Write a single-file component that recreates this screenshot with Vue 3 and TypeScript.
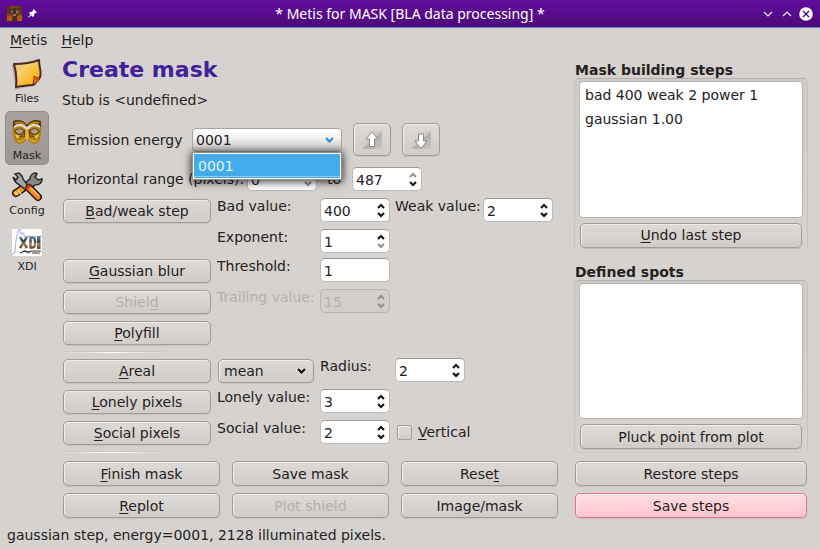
<script setup lang="ts">
import { computed, ref } from 'vue'

interface Part { text: string; mark: boolean }
type Cell =
  | { kind: 'button'; text: string; disabled?: boolean }
  | { kind: 'label'; text: string; target: string; disabled?: boolean }
  | { kind: 'spin'; id: string; min?: boolean; max?: boolean; disabled?: boolean }
  | { kind: 'text'; id: string }
  | { kind: 'select'; id: string; options: string[] }
  | { kind: 'check'; text: string }
  | { kind: 'rule' }
  | { kind: 'gap' }

// An ampersand marks the character that acts as the keyboard mnemonic.
function parts(label: string): Part[] {
  const at = label.indexOf('&')
  if (at < 0) return [{ text: label, mark: false }]
  return [
    { text: label.slice(0, at), mark: false },
    { text: label[at + 1], mark: true },
    { text: label.slice(at + 2), mark: false },
  ].filter((p) => p.text)
}

const values = ref<Record<string, string>>({
  low: '0', high: '487', bad: '400', weak: '2', exponent: '1', threshold: '1',
  trailing: '15', method: 'mean', radius: '2', lonely: '3', social: '2',
})
const vertical = ref(false)
const energy = ref('0001')
const energies = ['0001']
const menuOpen = ref(true)
const tool = ref('Mask')
const tools = ['Files', 'Mask', 'Config', 'XDI']
const steps = ref(['bad 400 weak 2 power 1', 'gaussian 1.00'])
const status = computed(() => `gaussian step, energy=${energy.value}, 2128 illuminated pixels.`)

const gap: Cell = { kind: 'gap' }
const cells: Cell[] = [
  { kind: 'button', text: '&Bad/weak step' },
  { kind: 'label', text: 'Bad value:', target: 'bad' },
  { kind: 'spin', id: 'bad' },
  { kind: 'label', text: 'Weak value:', target: 'weak' },
  { kind: 'spin', id: 'weak' },
  gap,
  { kind: 'label', text: 'Exponent:', target: 'exponent' },
  { kind: 'spin', id: 'exponent', min: true },
  gap, gap,
  { kind: 'button', text: '&Gaussian blur' },
  { kind: 'label', text: 'Threshold:', target: 'threshold' },
  { kind: 'text', id: 'threshold' },
  gap, gap,
  { kind: 'button', text: 'Shiel&d', disabled: true },
  { kind: 'label', text: 'Trailing value:', target: 'trailing', disabled: true },
  { kind: 'spin', id: 'trailing', disabled: true },
  gap, gap,
  { kind: 'button', text: '&Polyfill' },
  gap, gap, gap, gap,
  { kind: 'rule' },
  { kind: 'button', text: '&Areal' },
  { kind: 'select', id: 'method', options: ['mean', 'median'] },
  { kind: 'label', text: 'Radius:', target: 'radius' },
  { kind: 'spin', id: 'radius' },
  gap,
  { kind: 'button', text: '&Lonely pixels' },
  { kind: 'label', text: 'Lonely value:', target: 'lonely' },
  { kind: 'spin', id: 'lonely' },
  gap, gap,
  { kind: 'button', text: '&Social pixels' },
  { kind: 'label', text: 'Social value:', target: 'social' },
  { kind: 'spin', id: 'social' },
  { kind: 'check', text: '&Vertical' },
  gap,
  { kind: 'rule' },
]
const actions = [
  { text: '&Finish mask' }, { text: 'Save mask' }, { text: 'Rese&t' },
  { text: '&Replot' }, { text: 'Plot shield', disabled: true }, { text: 'Image/mask' },
]

function bump(id: string, by: number) {
  values.value[id] = String(Number(values.value[id]) + by)
}
function pick(value: string) {
  energy.value = value
  menuOpen.value = false
}
</script>

<template>
  <div class="window">
    <header class="titlebar">
      <div class="title-left">
        <svg class="app-icon" width="15" height="15" viewBox="0 0 15 15" aria-hidden="true">
          <rect width="15" height="15" fill="#8c4214" />
          <path d="M0 0h4l-1 4 1 3-4 2zM15 0h-4l1 4-1 3 4 2z" fill="#643018" />
          <path d="M3 2l2 1 2-1 3 1 2-1v3l-2 4v2l1 4H5l1-4V9L3 6z" fill="#3d322b" />
          <path d="M4 4l2 1v2L4 6zM9 5l3-1-1 3-2 1zM6 8h3v2H6z" fill="#8f7866" />
          <path d="M0 9l5 2v4H0zM10 11l5-2v6h-5z" fill="#b8560f" />
        </svg>
        <svg width="9" height="9" viewBox="0 0 9 9" aria-hidden="true">
          <path d="M5.6 0L9 3.4 8 4 7.4 3.8 6 5.4 6 7 5 8 3.2 6.2.8 8.4.2 7.8 2.6 5.6 1 4 2 3 3.6 3 5.2 1.6 5 .8z" fill="#fff" />
        </svg>
      </div>
      <div class="title">* Metis for MASK [BLA data processing] *</div>
      <div class="title-right">
        <button class="win" aria-label="Minimize">
          <svg width="14" height="14" viewBox="0 0 14 14"><path d="M3 5l4 4 4-4" fill="none" stroke="#efe6f8" stroke-width="1.2" /></svg>
        </button>
        <button class="win" aria-label="Maximize">
          <svg width="14" height="14" viewBox="0 0 14 14"><path d="M3 9l4-4 4 4" fill="none" stroke="#efe6f8" stroke-width="1.2" /></svg>
        </button>
        <button class="win" aria-label="Close">
          <svg width="14" height="14" viewBox="0 0 14 14"><circle cx="7" cy="7" r="6.8" fill="#fff" /><path d="M4 4l6 6M10 4l-6 6" stroke="#4b0d80" stroke-width="1.4" /></svg>
        </button>
      </div>
    </header>

    <nav class="menubar">
      <button v-for="m in ['&Metis', '&Help']" :key="m" class="menu"><span v-for="(p, i) in parts(m)" :key="i" :class="{ mark: p.mark }">{{ p.text }}</span></button>
    </nav>

    <div class="body">
      <nav class="tools">
        <button v-for="t in tools" :key="t" class="tool" :class="{ active: t === tool }" @click="tool = t">
          <svg v-if="t === 'Files'" width="32" height="32" viewBox="0 0 32 32" aria-hidden="true">
            <defs>
              <linearGradient id="note" x1="0" y1="0" x2="1" y2="1">
                <stop offset="0" stop-color="#e3b878" /><stop offset=".35" stop-color="#f5cc72" /><stop offset=".65" stop-color="#f9bd28" /><stop offset="1" stop-color="#f2a71d" />
              </linearGradient>
            </defs>
            <path d="M1 6C2 14 4 22 4 31c7-2 14-4 21-4l-4-20z" fill="#8b8783" opacity=".55" />
            <path d="M3 5c9 0 17-1 25-4 0 8 3 12 1 17-2 4-5 6-7 8-6 0-11 1-17 2C6 20 5 12 3 5z" fill="url(#note)" stroke="#4e2a1c" stroke-width="2" stroke-linejoin="round" />
            <path d="M22 25c1-3 1-5 1-8 2 2 4 2 6 2-1 3-4 5-7 6z" fill="#ee7a1d" stroke="#7d3015" stroke-width="1" />
            <path d="M25 18l2 2-2 3z" fill="#e72f19" />
          </svg>
          <svg v-else-if="t === 'Mask'" width="32" height="32" viewBox="0 0 32 32" aria-hidden="true">
            <path d="M2 6C6 4 12 5 16 8c4-3 10-4 14-2 1 6 0 15-2 20-4 3-8 2-10-1l-2-2-2 2c-2 3-6 4-10 1C2 20 1 11 2 6z" fill="#b07f16" />
            <path d="M2 5c5-2 11-1 14 4 3-5 9-6 14-4v6c-5-3-10-2-12 2h-4C12 9 7 8 2 11z" fill="#5c3a14" />
            <path d="M3 10c5-4 10-2 13 1 3-3 8-5 13-1v2c-5-3-9-2-11 1h-4c-2-3-6-4-11-1z" fill="#e2dacd" />
            <path d="M4 7c4-1 8 0 10 2M28 7c-4-1-8 0-10 2" fill="none" stroke="#c99720" stroke-width="1.5" />
            <path d="M4 15c2-3 7-3 9 0-1 4-7 5-9 0zM19 15c2-3 7-3 9 0-2 5-8 4-9 0z" fill="#a9a19b" stroke="#6b440d" stroke-width="1.2" />
            <path d="M14 13h4l1 9-3 2-3-2z" fill="#e5b534" />
            <path d="M14 14l-1 8M18 14l1 8M5 21l7-1M20 20l7 1" stroke="#5b3808" stroke-width="1.2" />
            <path d="M4 18l5 2-3 3zM23 20l5-2-2 5z" fill="#f5c633" />
            <path d="M6 25c4 1 7-1 8-3M26 25c-4 1-7-1-8-3" stroke="#f0c43b" fill="none" />
          </svg>
          <svg v-else-if="t === 'Config'" width="32" height="32" viewBox="0 0 32 32" aria-hidden="true">
            <path d="M14 16L5 22" stroke="#211a16" stroke-width="8" stroke-linecap="round" />
            <path d="M14 16L5 22" stroke="#f39a20" stroke-width="5" stroke-linecap="round" />
            <path d="M7 19l3 4M4 21l3 3" stroke="#ffe084" stroke-width="1.5" />
            <path d="M14 15c1-4 3-6 5-7 0-3 2-6 6-6l1 1-2 3 3 3 4-1c0 4-3 6-7 6-2 1-4 4-7 5z" fill="#898987" stroke="#292827" stroke-width="1.5" />
            <path d="M4 3l4-1c2 2 4 3 4 6l6 8-3 3-8-6C5 12 3 9 2 6l3 3 2-3z" fill="#a4a4a2" stroke="#292827" stroke-width="1.5" />
            <path d="M18 17l9 9" stroke="#251b16" stroke-width="8" stroke-linecap="round" />
            <path d="M18 17l9 9" stroke="#f38723" stroke-width="5" stroke-linecap="round" />
            <path d="M20 17l8 8" stroke="#ffc27c" stroke-width="1.5" />
            <path d="M15 18l4-4" stroke="#df2618" stroke-width="3" />
          </svg>
          <svg v-else width="32" height="32" viewBox="0 0 32 32" aria-hidden="true">
            <defs>
              <linearGradient id="metal" gradientUnits="userSpaceOnUse" x1="0" y1="9" x2="0" y2="22">
                <stop offset="0" stop-color="#6d8ba0" /><stop offset=".45" stop-color="#36444b" /><stop offset=".6" stop-color="#ad8355" /><stop offset="1" stop-color="#4f3926" />
              </linearGradient>
            </defs>
            <path d="M1 2h30v27H1z" fill="#fff" />
            <path d="M1 28l3-3 1-12 2-9 2-2 1 5 2-1 2 4 3-1 3 1 11-1" fill="none" stroke="#b8b6f6" stroke-width="1.2" />
            <path d="M9 10l7 11M16 10L9 21M27.500 9.500v12" fill="none" stroke="url(#metal)" stroke-width="2.600" />
            <path d="M19.500 10.500h2c3.500 0 3.500 10 0 10h-2z" fill="none" stroke="url(#metal)" stroke-width="2.400" />
            <path d="M26 9h3.500v13H26z" fill="url(#metal)" />
            <path d="M9 26l5-2 3 1 4-1h9M12 24l7 2M21 26h8" fill="none" stroke="#3b3733" stroke-width="1.2" />
          </svg>
          <span>{{ t }}</span>
        </button>
      </nav>

      <main class="main">
        <h1>Create mask</h1>
        <p class="stub">Stub is &lt;undefined&gt;</p>

        <div class="line energy-line">
          <label class="line-label" for="energy">Emission energy</label>
          <div class="combo">
            <select id="energy" v-model="energy" class="energy-select">
              <option v-for="e in energies" :key="e">{{ e }}</option>
            </select>
            <svg class="combo-arrow" width="9" height="6" viewBox="0 0 9 6" aria-hidden="true"><path d="M1 1l3.5 3.5L8 1" fill="none" stroke="#3684df" stroke-width="2" /></svg>
            <div v-if="menuOpen" class="popup" role="listbox" aria-label="Emission energy">
              <div v-for="e in energies" :key="e" class="option" role="option" :aria-selected="e === energy" @click="pick(e)">{{ e }}</div>
            </div>
          </div>
          <button v-for="d in ['Up', 'Down']" :key="d" class="btn arrow" :aria-label="d">
            <svg width="22" height="20" viewBox="0 0 22 20" aria-hidden="true">
              <defs>
                <linearGradient :id="'tile' + d" x1="0" y1="0" x2="1" y2="1">
                  <stop offset="0" stop-color="#dedcda" /><stop offset=".5" stop-color="#cbc9c6" /><stop offset=".52" stop-color="#b3b1af" /><stop offset="1" stop-color="#c9c7c5" />
                </linearGradient>
              </defs>
              <rect x="1" y="1" width="20" height="18" rx="3" :fill="`url(#tile${d})`" />
              <path v-if="d === 'Up'" d="M11 2L17 9h-3.500v7.500h-5V9H5z" fill="#fff" stroke="#8b8a88" />
              <path v-else d="M11 18.500L17 11h-3.500V4h-5v7H5z" fill="#fff" stroke="#8b8a88" />
            </svg>
          </button>
        </div>

        <div class="line range-line">
          <label class="line-label" for="low">Horizontal range (pixels):</label>
          <template v-for="id in ['low', 'high']" :key="id">
            <label v-if="id === 'high'" class="to" for="high">to</label>
            <div class="spin">
              <input :id="id" v-model="values[id]" type="text" />
              <div class="steppers">
                <button aria-label="Increase" :class="{ dim: id === 'high' }" @click="bump(id, 1)"><svg width="8" height="6" viewBox="0 0 8 6"><path d="M1 5l3-3 3 3" /></svg></button>
                <button aria-label="Decrease" :class="{ dim: id === 'low' }" @click="bump(id, -1)"><svg width="8" height="6" viewBox="0 0 8 6"><path d="M1 1l3 3 3-3" /></svg></button>
              </div>
            </div>
          </template>
        </div>

        <div class="form">
          <template v-for="(c, n) in cells" :key="n">
            <button v-if="c.kind === 'button'" class="btn" :disabled="c.disabled"><span v-for="(p, i) in parts(c.text)" :key="i" :class="{ mark: p.mark }">{{ p.text }}</span></button>
            <label v-else-if="c.kind === 'label'" class="field-label" :class="{ off: c.disabled }" :for="c.target">{{ c.text }}</label>
            <div v-else-if="c.kind === 'spin'" class="spin" :class="{ disabled: c.disabled }">
              <input :id="c.id" v-model="values[c.id]" type="text" :disabled="c.disabled" />
              <div class="steppers">
                <button aria-label="Increase" :disabled="c.disabled" :class="{ dim: c.max || c.disabled }" @click="bump(c.id, 1)"><svg width="8" height="6" viewBox="0 0 8 6"><path d="M1 5l3-3 3 3" /></svg></button>
                <button aria-label="Decrease" :disabled="c.disabled" :class="{ dim: c.min || c.disabled }" @click="bump(c.id, -1)"><svg width="8" height="6" viewBox="0 0 8 6"><path d="M1 1l3 3 3-3" /></svg></button>
              </div>
            </div>
            <div v-else-if="c.kind === 'text'" class="spin">
              <input :id="c.id" v-model="values[c.id]" type="text" />
            </div>
            <div v-else-if="c.kind === 'select'" class="combo method">
              <select :id="c.id" v-model="values[c.id]" class="btn method-select" aria-label="Averaging method">
                <option v-for="o in c.options" :key="o">{{ o }}</option>
              </select>
              <svg class="combo-arrow" width="9" height="6" viewBox="0 0 9 6" aria-hidden="true"><path d="M1 1l3.5 3.5L8 1" fill="none" stroke="#111" stroke-width="2" /></svg>
            </div>
            <label v-else-if="c.kind === 'check'" class="check">
              <input v-model="vertical" type="checkbox" />
              <span><span v-for="(p, i) in parts(c.text)" :key="i" :class="{ mark: p.mark }">{{ p.text }}</span></span>
            </label>
            <div v-else-if="c.kind === 'rule'" class="rule"></div>
            <div v-else></div>
          </template>
        </div>

        <div class="actions">
          <button v-for="a in actions" :key="a.text" class="btn tall" :disabled="a.disabled"><span v-for="(p, i) in parts(a.text)" :key="i" :class="{ mark: p.mark }">{{ p.text }}</span></button>
        </div>
      </main>

      <aside class="side">
        <div class="groups">
          <section class="group">
            <h2>Mask building steps</h2>
            <div class="frame">
              <ul class="list"><li v-for="s in steps" :key="s">{{ s }}</li></ul>
              <button class="btn tall" @click="steps.pop()"><span class="mark">U</span>ndo last step</button>
            </div>
          </section>
          <section class="group">
            <h2>Defined spots</h2>
            <div class="frame">
              <ul class="list"></ul>
              <button class="btn tall">Pluck point from plot</button>
            </div>
          </section>
        </div>
        <div class="side-actions">
          <button class="btn tall">Restore steps</button>
          <button class="btn tall pink">Save steps</button>
        </div>
      </aside>
    </div>

    <footer class="status">{{ status }}</footer>
  </div>
</template>

<style>
body {
  margin: 0;
  background: #d6d2cf;
}
</style>

<style scoped>
.window {
  box-sizing: border-box;
  display: flex;
  flex-direction: column;
  min-height: 100vh;
  background: #d6d2cf;
  color: #24211f;
  font: 14px/18px "DejaVu Sans", sans-serif;
}
.window *,
.window *::before {
  box-sizing: border-box;
}
button,
input,
select {
  font: inherit;
  color: inherit;
  margin: 0;
}
.mark {
  text-decoration: underline;
  text-decoration-thickness: 1px;
  text-underline-offset: 2px;
  text-decoration-skip-ink: none;
}
.titlebar {
  display: grid;
  grid-template-columns: 1fr auto 1fr;
  align-items: center;
  height: 28px;
  padding: 0 7px;
  background: linear-gradient(#620e9c, #4c0a7a);
  border-bottom: 1px solid #6a7fd0;
  color: #fff;
  font: 14px/20px "Noto Sans", sans-serif;
}
.title-left,
.title-right {
  display: flex;
  align-items: center;
  gap: 6px;
}
.title-right {
  justify-content: flex-end;
  gap: 5px;
}
.win {
  display: flex;
  padding: 0;
  border: 0;
  background: none;
}
.menubar {
  display: flex;
  gap: 14px;
  padding: 3px 10px;
}
.menu {
  padding: 0;
  border: 0;
  background: none;
}
.body {
  display: flex;
  flex: 1;
}
.tools {
  flex: none;
  width: 58px;
  padding: 3px 0 0 5px;
  display: flex;
  flex-direction: column;
  gap: 2px;
}
.tool {
  display: flex;
  flex-direction: column;
  align-items: center;
  width: 44px;
  height: 54px;
  padding: 4px 0 0;
  border: 0;
  border-radius: 5px;
  background: none;
  font-size: 11px;
  line-height: 16px;
}
.tool svg {
  flex: none;
}
.tool.active {
  background: linear-gradient(#aaa39f, #9d9692);
  border: 1px solid #918b87;
}
.main {
  flex: 495;
  min-width: 0;
  display: flex;
  flex-direction: column;
  padding: 4px 0 0 5px;
}
h1 {
  margin: 0 0 7px -1px;
  font-size: 22px;
  line-height: 28px;
  color: #421f9b;
}
.stub {
  margin: 0 0 14px -1px;
}
.line {
  display: flex;
  align-items: center;
  padding-left: 4px;
}
.line-label {
  flex: none;
}
.energy-line .line-label {
  width: 125px;
}
.range-line .line-label {
  width: 180px;
}
.range-line {
  height: 24px;
  margin: 11px 0 7px;
}
.to {
  width: 35px;
  padding-left: 10px;
}
.combo {
  position: relative;
  width: 150px;
}
.combo select {
  display: block;
  width: 100%;
  height: 24px;
  appearance: none;
}
.energy-select {
  padding: 0 3px;
  border: 1px solid #a9a5a2;
  border-radius: 4px;
  background: linear-gradient(#fff, #f4f3f2 40%, #c5c2c0);
}
.combo-arrow {
  position: absolute;
  right: 8px;
  top: 9px;
  pointer-events: none;
}
.popup {
  position: absolute;
  z-index: 2;
  top: 24px;
  left: 0;
  right: 0;
  border: 1px solid #8f9498;
  background: #fff;
  padding: 1px;
  box-shadow: 0 1px 8px 1px rgba(0, 0, 0, 0.75);
}
.option {
  height: 24px;
  padding: 0 4px;
  line-height: 25px;
  background: #43abe9;
  color: #e4f3fd;
  border-bottom: 1px solid #43abe9;
  box-shadow: inset 0 -1px #8accf2;
}
.btn {
  align-self: end;
  height: 24px;
  padding: 0 4px;
  border: 1px solid #a19c98;
  border-radius: 5px;
  background: linear-gradient(#dedad7, #d0ccc9);
  box-shadow: inset 1px 1px #f0eeec, 0 1px 1px #c4c0bd;
  line-height: 20px;
  white-space: nowrap;
}
.btn:disabled {
  color: #b5b0ac;
}
.btn.tall {
  height: 25px;
}
.btn.arrow {
  display: grid;
  place-items: center;
  width: 38px;
  height: 33px;
  margin-left: 11px;
}
.form {
  display: grid;
  grid-template-columns: 149px 98px 70px 83px 70px;
  grid-template-rows: 25px 23px 25px 25px 25px 1px 25px 25px 25px 1px;
  gap: 6px 5px;
}
.form > .btn {
  margin-right: 1px;
}
.field-label {
  white-space: nowrap;
  line-height: 17px;
}
.off {
  color: #b5b0ac;
}
.spin {
  display: flex;
  width: 70px;
  height: 24px;
  border: 1px solid #bdb9b6;
  border-top-color: #9d9996;
  border-radius: 5px;
  background: #fff;
  overflow: hidden;
}
.spin input {
  flex: 1;
  min-width: 0;
  padding: 1px 0 0 3px;
  border: 0;
  outline: 0;
  background: none;
}
.spin.disabled {
  background: #d2cecb;
  border-color: #b8b4b1;
}
.spin.disabled input {
  color: #b5b0ac;
}
.steppers {
  display: flex;
  flex-direction: column;
  justify-content: center;
  gap: 3px;
  width: 13px;
  margin-right: 2px;
}
.steppers button {
  display: grid;
  place-items: center;
  height: 6px;
  padding: 0;
  border: 0;
  background: none;
}
.steppers path {
  fill: none;
  stroke: #111;
  stroke-width: 2;
}
.steppers .dim path {
  stroke: #92908e;
}
.combo.method {
  align-self: end;
  width: 96px;
  margin-left: 1px;
}
.method-select {
  padding: 0 5px;
}
.check {
  display: flex;
  align-items: center;
  gap: 6px;
  height: 24px;
  padding-left: 2px;
}
.check input {
  appearance: none;
  width: 15px;
  height: 15px;
  border: 1px solid #a19c98;
  border-radius: 2px;
  background: linear-gradient(#dedad7, #d0ccc9);
  box-shadow: inset 1px 1px #f0eeec;
}
.check input:checked {
  background: #43abe9;
}
.rule {
  grid-column: 1 / -1;
  width: 100px;
  height: 2px;
  background: linear-gradient(90deg, transparent, #fff 50%, transparent);
  border-top: 1px solid #cbc7c4;
}
.actions {
  display: grid;
  grid-template-columns: repeat(3, 1fr);
  gap: 7px 12px;
  margin-top: auto;
}
.side {
  flex: 232;
  min-width: 0;
  display: flex;
  flex-direction: column;
  gap: 8px;
  padding: 10px 13px 0 17px;
}
.groups {
  flex: 1;
  display: flex;
  flex-direction: column;
  gap: 12px;
}
.group {
  flex: 1;
  display: flex;
  flex-direction: column;
}
h2 {
  margin: 0;
  font-size: 14px;
  line-height: 16px;
}
.frame {
  flex: 1;
  display: flex;
  flex-direction: column;
  gap: 5px;
  margin: 0 -1px;
  padding: 2px 4px 3px;
  border: 1px solid;
  border-color: #b4b0ad #c6c2bf transparent;
  border-radius: 5px;
  background: linear-gradient(#cfcbc8, #d6d2cf);
}
.frame .btn {
  align-self: stretch;
  margin: 0 1px;
}
.list {
  flex: 1;
  margin: 0;
  padding: 1px 5px;
  border: 1px solid #b8b4b1;
  border-radius: 4px;
  background: #fff;
  list-style: none;
  line-height: 24px;
}
.side-actions {
  display: flex;
  flex-direction: column;
  gap: 7px;
}
.side-actions .btn {
  align-self: stretch;
}
.btn.pink {
  border-color: #ec7189;
  background: linear-gradient(#ffdfe4, #ffc4cd);
  box-shadow: inset 1px 1px #fff0f2, 0 1px 1px #c4c0bd;
}
.status {
  padding: 8px 7px 5px;
}
</style>
